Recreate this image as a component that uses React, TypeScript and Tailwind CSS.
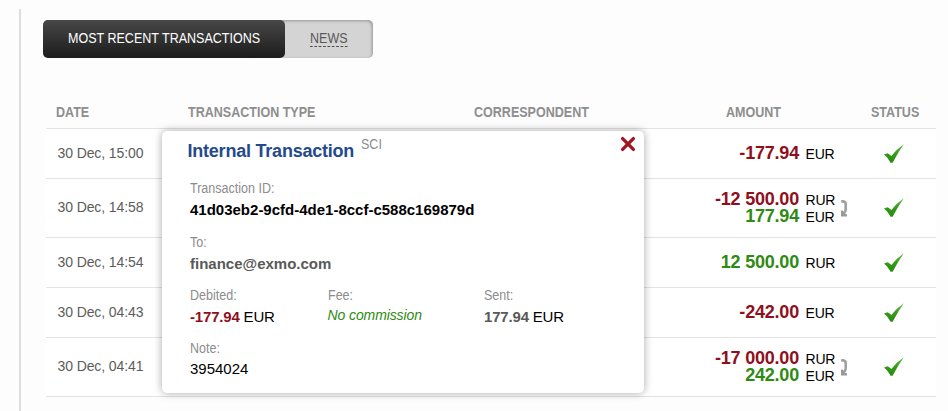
import React, { useState } from "react";

type Amount = { value: string; currency: string };

type Transaction = {
  id: string;
  date: string;
  amounts: Amount[];
};

const transactions: Transaction[] = [
  { id: "1", date: "30 Dec, 15:00", amounts: [{ value: "-177.94", currency: "EUR" }] },
  {
    id: "2",
    date: "30 Dec, 14:58",
    amounts: [
      { value: "-12 500.00", currency: "RUR" },
      { value: "177.94", currency: "EUR" },
    ],
  },
  { id: "3", date: "30 Dec, 14:54", amounts: [{ value: "12 500.00", currency: "RUR" }] },
  { id: "4", date: "30 Dec, 04:43", amounts: [{ value: "-242.00", currency: "EUR" }] },
  {
    id: "5",
    date: "30 Dec, 04:41",
    amounts: [
      { value: "-17 000.00", currency: "RUR" },
      { value: "242.00", currency: "EUR" },
    ],
  },
];

const CheckIcon = () => (
  <svg width="20" height="20" viewBox="0 0 20 20">
    <defs>
      <linearGradient id="check" x1="0" y1="0" x2="0" y2="1">
        <stop offset="0" stopColor="#6fbc5a" />
        <stop offset="0.5" stopColor="#359a1b" />
        <stop offset="1" stopColor="#2a8a10" />
      </linearGradient>
    </defs>
    <path d="M0 10.6 L3.6 9.3 Q5.6 10.4 7.4 12 Q12.5 5.2 19.8 0.3 Q14 8.6 8.6 18.8 L6.6 18.8 Q4.2 14 0 10.6Z" fill="url(#check)" />
  </svg>
);

const ExchangeIcon = () => (
  <svg width="7" height="17" viewBox="0 0 7 17">
    <path d="M0.2 1.4 H2.2 Q4.7 1.6 4.7 4.4 V9.3 Q4.7 11.8 3 13" fill="none" stroke="#a0a0a0" strokeWidth="2.6" />
    <path d="M0 10.4 L1.6 10.4 L4.6 14 L6 14.2 V16.4 H0 Z" fill="#999" />
  </svg>
);

const CloseIcon = () => (
  <svg width="16" height="16" viewBox="0 0 16 16">
    <path d="M2.6 2.6 L13.4 13.4 M13.4 2.6 L2.6 13.4" stroke="#a3141f" strokeWidth="3.3" strokeLinecap="round" />
  </svg>
);

// Slightly condensed run of text, used by tabs, headings and labels
const Narrow = ({ children }: { children: React.ReactNode }) => (
  <span className="inline-block origin-left scale-x-[0.895] whitespace-nowrap">{children}</span>
);

const Row = ({ item }: { item: Transaction }) => (
  <div
    className={`flex items-center border-b border-[#e3e3e3] ${
      item.amounts.length > 1 ? "h-[59px]" : "h-[50px]"
    }`}
  >
    <div className="w-[565px] pb-[2px] pl-[11.5px] text-[14px] leading-4 tracking-[-0.1px] text-[#5c5c5c]">
      {item.date}
    </div>
    <div className="w-[224px] pb-px">
      {item.amounts.map((a) => (
        <div key={a.currency} className="flex h-[17px] items-baseline justify-end leading-[17px]">
          <span
            className={`text-[18px] font-bold tracking-[-0.2px] ${
              a.value.startsWith("-") ? "text-[#8f101d]" : "text-[#2f8a14]"
            }`}
          >
            {a.value}
          </span>
          <span className="w-[36px] pl-[6.5px] text-[14px] tracking-[-0.2px] text-black">{a.currency}</span>
        </div>
      ))}
    </div>
    <div className="w-[49px] pl-[6px]">{item.amounts.length > 1 && <ExchangeIcon />}</div>
    <CheckIcon />
  </div>
);

const Field = ({ label, children }: { label: string; children: React.ReactNode }) => (
  <div>
    <div className="text-[14px] leading-4 text-[#8c8c8c]">
      <Narrow>{label}</Narrow>
    </div>
    {children}
  </div>
);

const TransactionPopup = ({ onClose }: { onClose: () => void }) => (
  <div className="absolute left-[162px] top-[131px] h-[262px] w-[482px] rounded-[5px] bg-white pl-[28px] shadow-[0_0_9px_rgba(0,0,0,0.35)]">
    <button onClick={onClose} className="absolute right-[8px] top-[5px]">
      <CloseIcon />
    </button>
    <div className="-ml-[2.5px] flex h-[49px] items-start pt-[9px]">
      <h2 className="text-[18px] font-bold leading-[22px] tracking-[-0.22px] text-[#234a8c]">Internal Transaction</h2>
      <span className="-mt-[4px] ml-[7px] text-[14px] leading-4 text-[#8c8c8c]">
        <Narrow>SCI</Narrow>
      </span>
    </div>
    <Field label="Transaction ID:">
      <div className="pt-[6px] text-[15px] font-bold leading-4 text-black">
        41d03eb2-9cfd-4de1-8ccf-c588c169879d
      </div>
    </Field>
    <div className="mt-4">
      <Field label="To:">
        <div className="pt-[6px] text-[15px] font-bold leading-4 text-[#595959]">finance@exmo.com</div>
      </Field>
    </div>
    <div className="mt-[15px] flex">
      <div className="w-[137.5px]">
        <Field label="Debited:">
          <div className="pt-[6px] text-[15px] leading-4 tracking-[-0.18px] text-black">
            <b className="text-[#8f101d]">-177.94</b> EUR
          </div>
        </Field>
      </div>
      <div className="w-[156.5px]">
        <Field label="Fee:">
          <div className="pt-1 text-[14px] italic leading-4 tracking-[-0.1px] text-[#2f8a14]">No commission</div>
        </Field>
      </div>
      <Field label="Sent:">
        <div className="pt-[6px] text-[15px] leading-4 tracking-[-0.18px] text-black">
          <b className="text-[#595959]">177.94</b> EUR
        </div>
      </Field>
    </div>
    <div className="mt-[15px]">
      <Field label="Note:">
        <div className="pt-[5px] text-[15px] leading-4 text-black">3954024</div>
      </Field>
    </div>
  </div>
);

const App = () => {
  const [open, setOpen] = useState(true);

  return (
    <div className="relative h-[411px] w-[948px] overflow-hidden bg-[#fdfdfd] pl-[19px] pt-[9px] font-['Liberation_Sans',Arial,sans-serif]">
      <div className="h-[402px] border-l-2 border-[#dedede] pt-[11px]">
        {/* Tabs */}
        <div className="ml-[22px] flex h-[38px] w-[330px] rounded-[5px] bg-[#d4d4d4] text-[14px] leading-4 shadow-[inset_-1px_1px_3px_rgba(0,0,0,0.3)]">
          <button className="w-[242px] rounded-[5px] bg-linear-to-b from-[#484848] to-[#1c1c1c] pb-[2px] pl-[25px] text-left text-white">
            <Narrow>MOST RECENT TRANSACTIONS</Narrow>
          </button>
          <button className="flex items-center pb-px pl-[25px] text-[#5a5a5a]">
            <Narrow>
              <span className="block border-b border-dashed border-[#444]">NEWS</span>
            </Narrow>
          </button>
        </div>

        {/* Table */}
        <div className="ml-[25px] mt-[38px] w-[890px]">
          <div className="flex h-[33px] items-center border-b border-[#e3e3e3] text-[14px] font-bold leading-4 text-[#8e8e8e]">
            <div className="w-[142px] pl-[9.5px]">
              <Narrow>DATE</Narrow>
            </div>
            <div className="w-[286px]">
              <Narrow>TRANSACTION TYPE</Narrow>
            </div>
            <div className="w-[251.5px]">
              <Narrow>CORRESPONDENT</Narrow>
            </div>
            <div className="w-[145px]">
              <Narrow>AMOUNT</Narrow>
            </div>
            <div>
              <Narrow>STATUS</Narrow>
            </div>
          </div>
          <div className="bg-white">
            {transactions.map((item) => (
              <Row key={item.id} item={item} />
            ))}
          </div>
        </div>
      </div>

      {open && <TransactionPopup onClose={() => setOpen(false)} />}
    </div>
  );
};

export default App;
